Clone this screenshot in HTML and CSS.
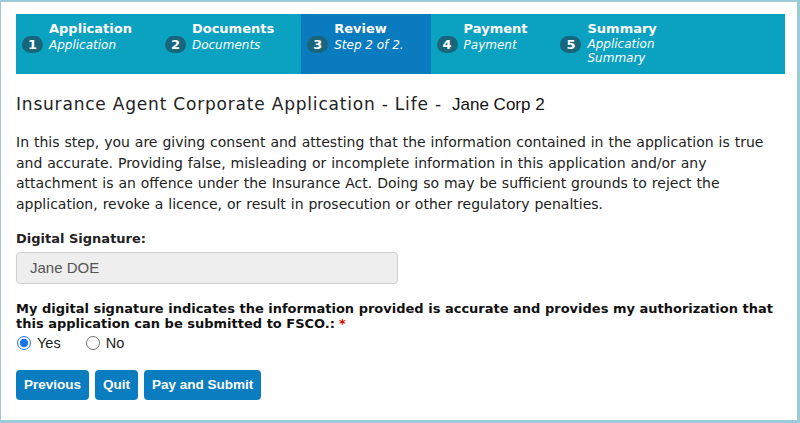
FILE: index.html
```html
<!DOCTYPE html>
<html>
<head>
<meta charset="utf-8">
<link rel="stylesheet" href="styles.css">
</head>
<body>
<div class="frame">
  <ol class="steps">
    <li class="step">
      <span class="num">1</span>
      <span class="title">Application</span>
      <span class="desc">Application</span>
    </li>
    <li class="step">
      <span class="num">2</span>
      <span class="title">Documents</span>
      <span class="desc">Documents</span>
    </li>
    <li class="step active">
      <span class="num">3</span>
      <span class="title">Review</span>
      <span class="desc">Step 2 of 2.</span>
    </li>
    <li class="step">
      <span class="num">4</span>
      <span class="title">Payment</span>
      <span class="desc">Payment</span>
    </li>
    <li class="step">
      <span class="num">5</span>
      <span class="title">Summary</span>
      <span class="desc">Application<br>Summary</span>
    </li>
  </ol>

  <h1 class="heading">Insurance Agent Corporate Application - Life - <span class="corp">Jane Corp 2</span></h1>

  <p class="intro">In this step, you are giving consent and attesting that the information contained in the application is true and accurate. Providing false, misleading or incomplete information in this application and/or any attachment is an offence under the Insurance Act. Doing so may be sufficient grounds to reject the application, revoke a licence, or result in prosecution or other regulatory penalties.</p>

  <label class="label" for="sig">Digital Signature:</label>
  <input class="field" id="sig" type="text" value="Jane DOE" readonly>

  <p class="question">My digital signature indicates the information provided is accurate and provides my authorization that this application can be submitted to FSCO.:<span class="req">*</span></p>
  <div class="radios">
    <label class="radio"><input type="radio" name="agree" checked> Yes</label>
    <label class="radio"><input type="radio" name="agree"> No</label>
  </div>

  <div class="buttons">
    <button class="btn">Previous</button>
    <button class="btn">Quit</button>
    <button class="btn">Pay and Submit</button>
  </div>
</div>
</body>
</html>
```

FILE: styles.css
```css
html, body {
  margin: 0;
  padding: 0;
  background: #fff;
}
.frame {
  box-sizing: border-box;
  width: 800px;
  height: 423px;
  border-style: solid;
  border-color: #9dcad7;
  border-width: 2px 3px 3px 1px;
  margin: 0;
  padding: 12px 12px 0 15px;
  font-family: "DejaVu Sans", Verdana, sans-serif;
  color: #222;
}
.steps {
  list-style: none;
  margin: 0;
  padding: 0;
  display: flex;
  background: #0aa2c0;
  height: 60px;
}
.step {
  display: grid;
  grid-template-columns: auto auto;
  grid-template-rows: auto auto;
  column-gap: 6px;
  align-items: center;
  align-content: start;
  padding: 7px 27px 0 6px;
  color: #fff;
}
.step.active {
  background: #0a7bbf;
}
.num {
  grid-column: 1;
  grid-row: 2;
  align-self: start;
  margin-top: -1px;
  width: 21px;
  height: 17px;
  border-radius: 9px;
  background: #17667b;
  color: #fff;
  font-weight: bold;
  font-size: 13px;
  line-height: 17px;
  text-align: center;
}
.title {
  grid-column: 2;
  grid-row: 1;
  font-weight: bold;
  font-size: 13px;
  line-height: 16px;
}
.desc {
  grid-column: 2;
  grid-row: 2;
  font-style: italic;
  font-size: 12px;
  line-height: 14px;
}
.heading {
  margin: 19px 0 0 0;
  font-size: 17px;
  font-weight: normal;
  line-height: 22px;
  letter-spacing: 0.8px;
  color: #222;
}
.corp {
  font-family: "Liberation Sans", Arial, sans-serif;
  font-size: 17px;
  letter-spacing: 0;
  margin-left: 4px;
  color: #111;
}
.intro {
  margin: 16px 0 0 0;
  font-size: 14px;
  line-height: 20.7px;
  word-spacing: 0.5px;
}
.label {
  display: block;
  margin-top: 15px;
  font-weight: bold;
  font-size: 13px;
  line-height: 18px;
}
.field {
  display: block;
  box-sizing: border-box;
  width: 382px;
  height: 32px;
  margin: 4px 0 0 0;
  padding: 0 13px;
  border: 1px solid #cfcfcf;
  border-radius: 4px;
  background: #eeeeee;
  font-family: "Liberation Sans", Arial, sans-serif;
  font-size: 15px;
  color: #555;
  outline: none;
}
.question {
  margin: 17px 0 0 0;
  font-weight: bold;
  font-size: 13px;
  line-height: 15px;
  color: #111;
}
.req {
  color: #d00;
  margin-left: 4px;
}
.radios {
  display: flex;
  gap: 24px;
  margin-top: 3px;
  font-family: "Liberation Sans", Arial, sans-serif;
  font-size: 14.5px;
  line-height: 18px;
}
.radio {
  display: flex;
  align-items: center;
  gap: 4px;
}
.radio input {
  margin: 0 2px 0 1px;
  width: 14px;
  height: 14px;
  accent-color: #1a73e8;
}
.buttons {
  display: flex;
  gap: 6px;
  margin-top: 18px;
}
.btn {
  height: 30px;
  padding: 0 8px;
  border: none;
  border-radius: 4px;
  background: #0a7dc0;
  color: #fff;
  font-family: "Liberation Sans", Arial, sans-serif;
  font-weight: bold;
  font-size: 13.5px;
}
```
